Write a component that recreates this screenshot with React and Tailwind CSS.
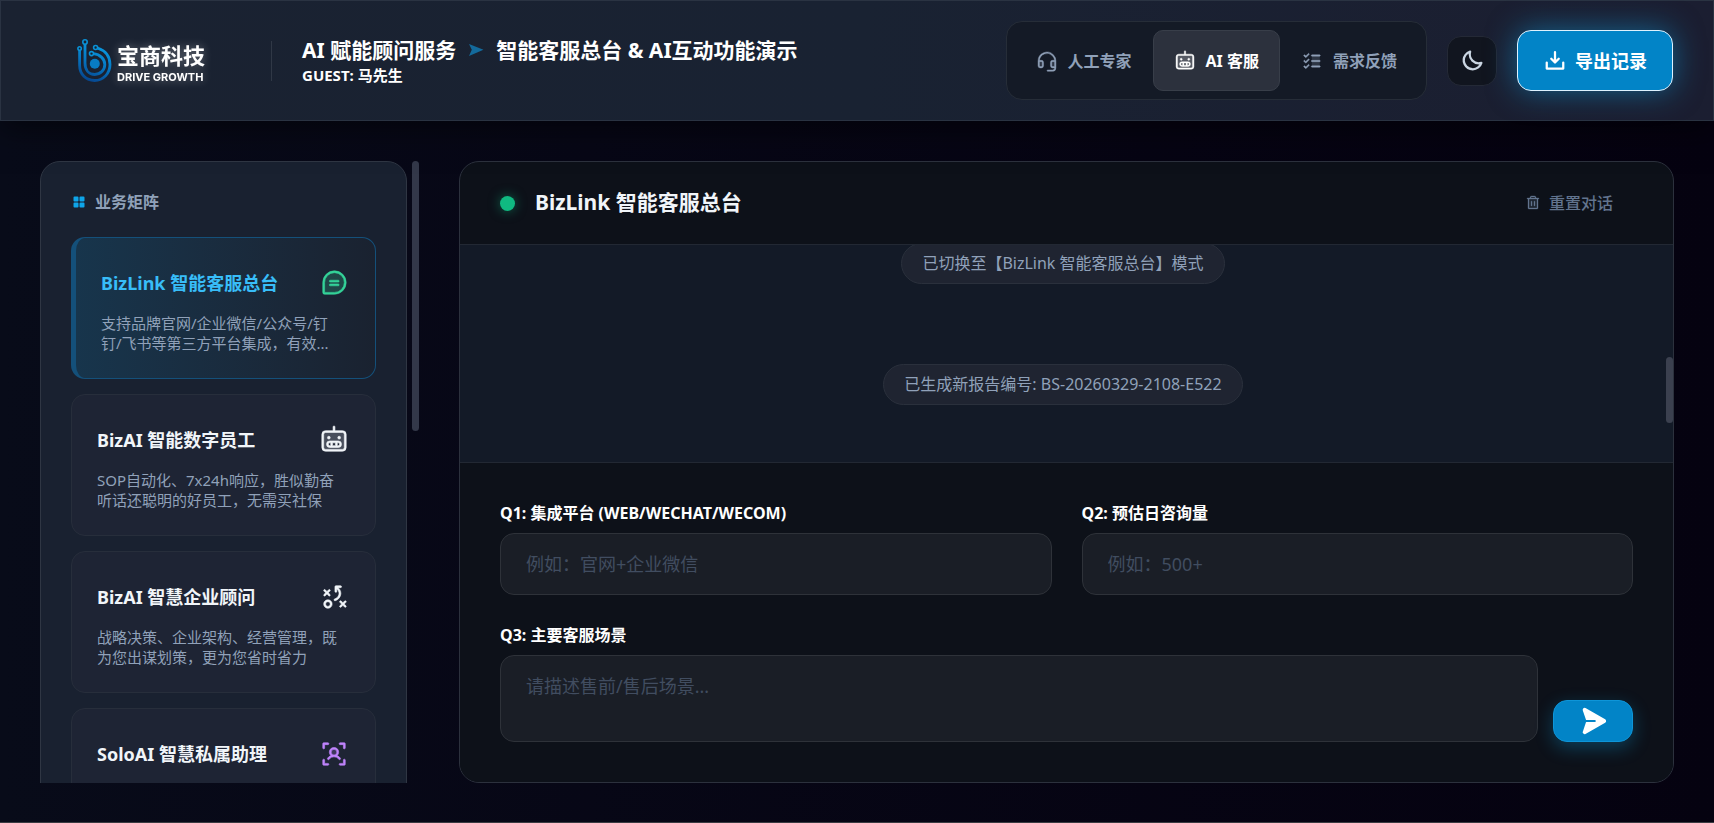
import { useState } from "react";
import clsx from "clsx";
import {
  PiChatTeardropTextDuotone,
  PiDownloadSimpleBold,
  PiHeadsetDuotone,
  PiListChecksDuotone,
  PiMoonBold,
  PiPaperPlaneRightFill,
  PiRobotDuotone,
  PiSquaresFourFill,
  PiStrategy,
  PiTrashDuotone,
  PiUserFocusDuotone,
} from "react-icons/pi";

const TABS = [
  { id: "expert", label: "人工专家", icon: PiHeadsetDuotone },
  { id: "ai", label: "AI 客服", icon: PiRobotDuotone },
  { id: "feedback", label: "需求反馈", icon: PiListChecksDuotone },
];

const SERVICES = [
  {
    id: "bizlink",
    title: "BizLink 智能客服总台",
    desc: "支持品牌官网/企业微信/公众号/钉钉/飞书等第三方平台集成，有效...",
    icon: PiChatTeardropTextDuotone,
    color: "text-[#34d399]",
  },
  {
    id: "employee",
    title: "BizAI 智能数字员工",
    desc: "SOP自动化、7x24h响应，胜似勤奋听话还聪明的好员工，无需买社保",
    icon: PiRobotDuotone,
    color: "text-slate-100",
  },
  {
    id: "advisor",
    title: "BizAI 智慧企业顾问",
    desc: "战略决策、企业架构、经营管理，既为您出谋划策，更为您省时省力",
    icon: PiStrategy,
    color: "text-slate-100",
  },
  {
    id: "solo",
    title: "SoloAI 智慧私属助理",
    icon: PiUserFocusDuotone,
    color: "text-[#c084fc]",
  },
];

const MESSAGES = ["已切换至【BizLink 智能客服总台】模式", "已生成新报告编号: BS-20260329-2108-E522"];

const LABEL = "text-base leading-5 font-bold text-white";
const FIELD =
  "w-full rounded-[14px] border border-[#2e3239] bg-[#1a1e26] px-[25px] text-lg text-white placeholder:text-[#414d60] outline-none focus:border-sky-600";

function Logo() {
  return (
    <a href="#" className="flex items-center gap-1 pl-9" aria-label="宝商科技">
      <svg viewBox="0 0 36 46" className="h-[46px] w-9" fill="none">
        <defs>
          <linearGradient id="logo-blue" x1="26" y1="4" x2="10" y2="44" gradientUnits="userSpaceOnUse">
            <stop stopColor="#0aa0e6" />
            <stop offset="0.5" stopColor="#067ac4" />
            <stop offset="1" stopColor="#06418a" />
          </linearGradient>
        </defs>
        <g stroke="url(#logo-blue)" strokeWidth="2.8">
          <path d="M2.6 12v15c0 9.500 6.400 15.500 15 15.500S33 35.500 33 26.500c0-8.500-5-14-12.600-16.500" />
          <path d="M8 6V25c0 7 3.800 11.500 9.800 11.500 5.600 0 10-4.400 10-10 0-5.400-4.500-10-11.500-10.800" />
        </g>
        <g fill="#192231" stroke="#0a91d6" strokeWidth="1.600">
          <circle cx="2.600" cy="10.500" r="1.700" />
          <circle cx="8" cy="4" r="2.200" />
          <circle cx="18.600" cy="9.500" r="2" />
          <circle cx="14.500" cy="15.600" r="2" />
        </g>
        <circle cx="17.800" cy="25.800" r="5" fill="#087cc3" />
      </svg>
      <span className="flex flex-col pt-1 text-white drop-shadow-[0_0_5px_rgba(255,255,255,0.35)]">
        <span className="text-[22px] leading-7 font-bold">宝商科技</span>
        <span className="font-[Inter] text-[11px] leading-4 font-bold">DRIVE GROWTH</span>
      </span>
    </a>
  );
}

function Header({ tab, onTabChange }) {
  return (
    <header className="relative z-10 flex items-center justify-between border border-[#2a3342] bg-linear-to-r from-[#1a2231] via-[#192232] to-[#1b1e31] px-10 py-5 shadow-[0_8px_30px_rgba(0,0,0,0.5)]">
      <div className="flex items-center">
        <Logo />
        <div className="mr-[30px] ml-[66px] h-10 w-px bg-[#303846]" />
        <div>
          <h1 className="flex items-center text-[21px] leading-7 font-bold text-white">
            AI 赋能顾问服务
            <svg viewBox="0 0 16 14" className="mx-3 h-3.5 w-4 fill-[#136a9c]">
              <path d="M1 1l14.500 5.800L1 13l2.800-6.200z" />
            </svg>
            智能客服总台 &amp; AI互动功能演示
          </h1>
          <p className="text-[15px] leading-[22px] font-bold text-white">GUEST: 马先生</p>
        </div>
      </div>

      <div className="flex items-center gap-5">
        <nav className="flex rounded-2xl border border-[#262d38] bg-[#141a26] p-2">
          {TABS.map(({ id, label, icon: Icon }) => (
            <button
              key={id}
              type="button"
              onClick={() => onTabChange(id)}
              className={clsx(
                "flex h-[61px] items-center gap-2.5 rounded-[10px] border px-5 text-base font-bold",
                tab === id ? "border-[#383e49] bg-[#2c313d] text-white" : "border-transparent text-slate-400"
              )}
            >
              <Icon className="size-[22px]" strokeWidth={5} />
              {label}
            </button>
          ))}
        </nav>
        <button
          type="button"
          aria-label="切换主题"
          className="flex size-[50px] items-center justify-center rounded-[14px] border border-[#242936] bg-[#11151f] text-slate-300"
        >
          <PiMoonBold className="size-6" />
        </button>
        <button
          type="button"
          className="flex h-[61px] items-center gap-2 rounded-[14px] border border-sky-100 bg-[#0284c7] px-[25px] text-lg font-bold text-white shadow-[0_0_30px_rgba(14,165,233,0.5)]"
        >
          <PiDownloadSimpleBold className="size-6" />
          导出记录
        </button>
      </div>
    </header>
  );
}

function ServiceCard({ service, active, onSelect }) {
  const Icon = service.icon;
  return (
    <button
      type="button"
      onClick={onSelect}
      className={clsx(
        "flex min-h-[142px] flex-col justify-start rounded-[14px] border px-[25px] pt-6 pb-5 text-left",
        active
          ? "border-l-5 border-[#14507a] bg-linear-to-r from-[#17354c] to-[#1a2230]"
          : "border-[#272e3b] bg-[#1e2434]"
      )}
    >
      <span className="mb-[9px] flex h-[42px] w-full items-center justify-between">
        <span className={clsx("text-lg font-bold", active ? "text-[#38bdf8]" : "text-slate-100")}>
          {service.title}
        </span>
        <span className="flex w-8 justify-center">
          <Icon className={clsx("size-[30px]", service.color)} strokeWidth={5} />
        </span>
      </span>
      {service.desc && (
        <span className="line-clamp-2 pr-2.5 text-[15px] leading-5 text-slate-400">{service.desc}</span>
      )}
    </button>
  );
}

function Sidebar({ selected, onSelect }) {
  return (
    <aside className="flex shrink-0 gap-[5px] overflow-hidden">
      <div className="flex h-max w-[367px] flex-col gap-[15px] rounded-[20px] border border-[#2f3643] bg-[#192130] p-[30px]">
        <h2 className="mb-2.5 flex h-5 items-center gap-2 text-base font-bold text-slate-400">
          <PiSquaresFourFill className="size-4 text-[#0ea5e9]" />
          业务矩阵
        </h2>
        {SERVICES.map((service) => (
          <ServiceCard
            key={service.id}
            service={service}
            active={selected === service.id}
            onSelect={() => onSelect(service.id)}
          />
        ))}
      </div>
      <div className="h-[270px] w-[7px] rounded-full bg-[#333849]" />
    </aside>
  );
}

function ChatForm() {
  return (
    <form className="flex flex-col gap-[30px] border-t border-[#222833] bg-[#0d1119] p-10">
      <div className="grid grid-cols-2 gap-[30px]">
        <div className="flex flex-col gap-2.5">
          <label htmlFor="q1" className={LABEL}>
            Q1: 集成平台 (WEB/WECHAT/WECOM)
          </label>
          <input id="q1" type="text" placeholder="例如：官网+企业微信" className={clsx(FIELD, "h-[62px]")} />
        </div>
        <div className="flex flex-col gap-2.5">
          <label htmlFor="q2" className={LABEL}>
            Q2: 预估日咨询量
          </label>
          <input id="q2" type="text" placeholder="例如：500+" className={clsx(FIELD, "h-[62px]")} />
        </div>
      </div>
      <div className="flex items-end gap-[15px]">
        <div className="flex flex-1 flex-col gap-2.5">
          <label htmlFor="q3" className={LABEL}>
            Q3: 主要客服场景
          </label>
          <textarea
            id="q3"
            placeholder="请描述售前/售后场景..."
            className={clsx(FIELD, "block h-[87px] resize-none py-4")}
          />
        </div>
        <button
          type="button"
          aria-label="发送"
          className="flex h-[42px] w-20 items-center justify-center rounded-[14px] border border-[#0e95d8] bg-[#0284c7] text-white shadow-[0_6px_18px_rgba(14,165,233,0.3)]"
        >
          <PiPaperPlaneRightFill className="size-[30px]" />
        </button>
      </div>
    </form>
  );
}

function ChatPanel({ title }) {
  return (
    <main className="flex min-w-0 flex-1 flex-col overflow-hidden rounded-[20px] border border-[#2c313d] bg-[#0d1119]">
      <div className="flex h-[83px] shrink-0 items-center justify-between border-b border-[#222833] px-10">
        <div className="flex items-center gap-5">
          <span className="size-[15px] rounded-full bg-[#10b981] shadow-[0_0_12px_rgba(16,185,129,0.5)]" />
          <h2 className="text-[21px] font-bold text-slate-100">{title}</h2>
        </div>
        <button type="button" className="flex items-center gap-2 px-5 text-base font-medium text-slate-500">
          <PiTrashDuotone className="size-4" strokeWidth={5} />
          重置对话
        </button>
      </div>

      <div className="relative flex min-h-0 flex-1 flex-col items-center justify-end gap-20 overflow-hidden bg-[#131a27] pr-[7px] pb-[57px]">
        {MESSAGES.map((text) => (
          <p
            key={text}
            className="shrink-0 rounded-full border border-[#2a303c] bg-[#1f2431] px-5 text-base leading-[39px] text-slate-400"
          >
            {text}
          </p>
        ))}
        <div className="absolute top-28 right-0 h-[66px] w-[7px] rounded-full bg-[#3b404f]" />
      </div>

      <ChatForm />
    </main>
  );
}

export default function App() {
  const [tab, setTab] = useState("ai");
  const [selected, setSelected] = useState("bizlink");
  const current = SERVICES.find((s) => s.id === selected);

  return (
    <div className="flex h-screen flex-col overflow-hidden border-b border-[#3a3c42] bg-linear-to-r from-[#080b19] to-[#050210] font-['Noto_Sans','Noto_Sans_CJK_SC',sans-serif]">
      <Header tab={tab} onTabChange={setTab} />
      <div className="flex min-h-0 flex-1 gap-10 px-10 pt-10 pb-[39px]">
        <Sidebar selected={selected} onSelect={setSelected} />
        <ChatPanel title={current.title} />
      </div>
    </div>
  );
}
